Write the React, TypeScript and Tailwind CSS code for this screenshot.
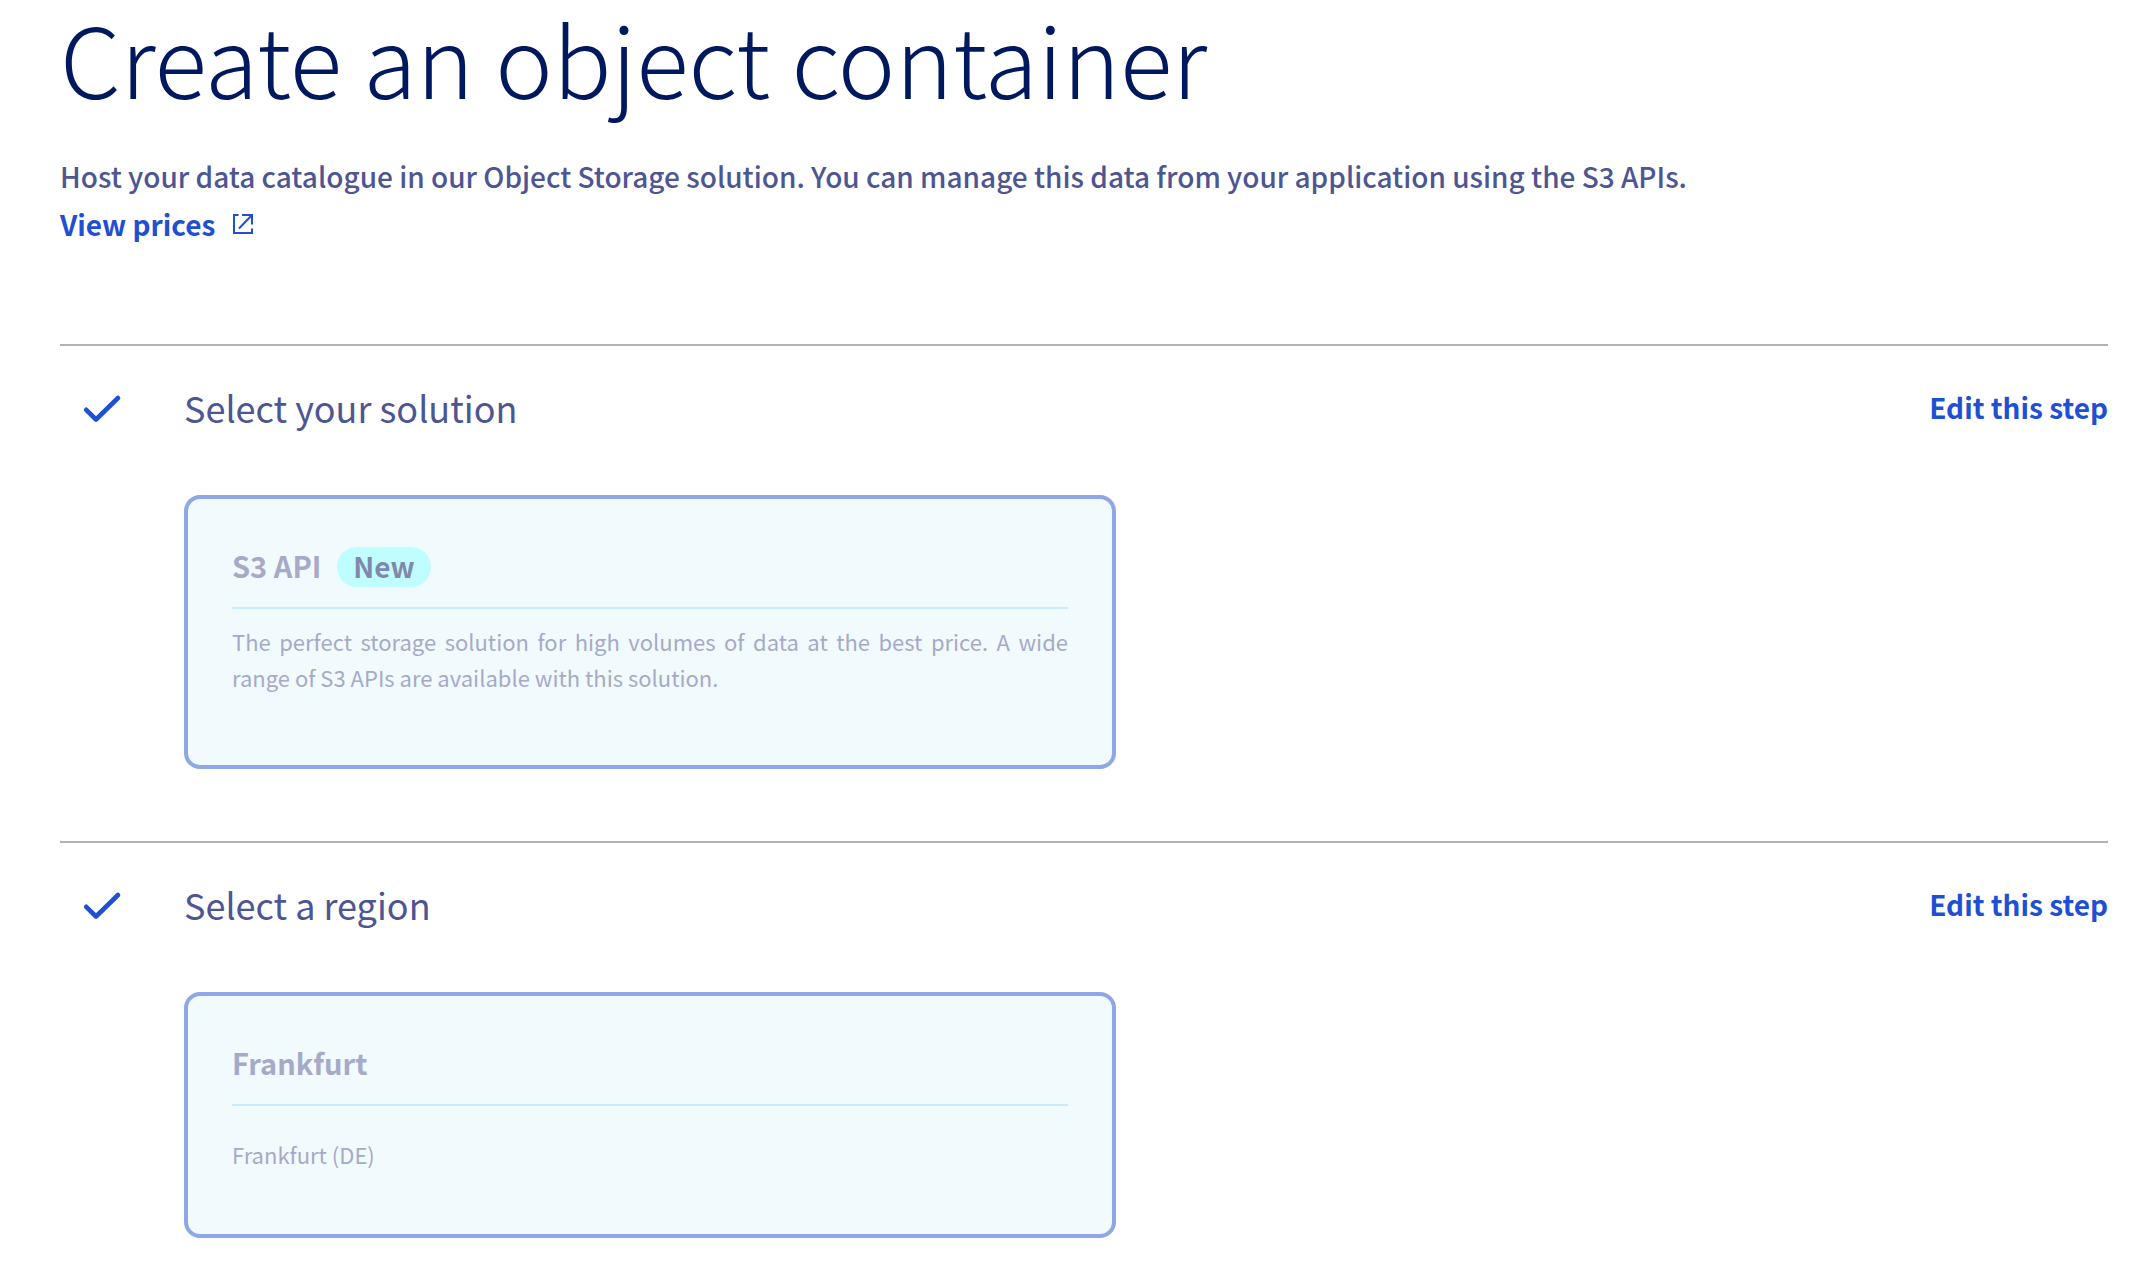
import { ReactNode } from "react";

interface StepProps {
  title: string;
  children: ReactNode;
}

interface SolutionCardProps {
  title: string;
  badge?: string;
  children: ReactNode;
}

function CheckIcon() {
  return (
    <svg viewBox="0 0 40 32" className="w-10 h-8" fill="none" aria-hidden="true">
      <path
        d="M4.2 18.8 L14 28.5 L36 7"
        stroke="#1f4fd3"
        strokeWidth="4.6"
        strokeLinecap="round"
        strokeLinejoin="round"
      />
    </svg>
  );
}

function ExternalLinkIcon() {
  return (
    <svg viewBox="0 0 20 20" className="w-5 h-5" fill="none" aria-hidden="true">
      <path
        d="M5.5 1H1V19H19V14.5M9 1H19V10.5M19 1L6 14.5"
        stroke="#1f4fd3"
        strokeWidth="2"
      />
    </svg>
  );
}

function Step({ title, children }: StepProps) {
  return (
    <section className="border-t-2 border-[#b3b3b3] pt-[37px] pb-[72px]">
      <div className="flex items-center">
        <div className="w-[124px] pl-[22px]">
          <CheckIcon />
        </div>
        <h2 className="flex-1 text-[36px] leading-[48px] text-[#4d5592]">{title}</h2>
        <button type="button" className="text-[28px] leading-[48px] font-bold text-[#1f4fd3]">
          Edit this step
        </button>
      </div>
      <div className="grid grid-cols-2 gap-[60px] pl-[124px] mt-16">{children}</div>
    </section>
  );
}

function SolutionCard({ title, badge, children }: SolutionCardProps) {
  return (
    <div className="border-4 border-[#8fa7e9] rounded-[16px] bg-[#f1fafd] p-11 text-[#a6aac8]">
      <div className="flex items-center gap-4 pb-4 border-b-2 border-[#cae9f9]">
        <h3 className="pb-1 text-[29px] leading-[44px] font-bold">{title}</h3>
        {badge && (
          <span className="rounded-full bg-[#c0fdff] px-4 pb-0.5 text-[28px] leading-[38px] font-bold text-[#8088ad]">
            {badge}
          </span>
        )}
      </div>
      {children}
    </div>
  );
}

function App() {
  return (
    <main className="pl-[60px] pr-[42px] bg-white font-['Noto_Sans_CJK_SC',sans-serif]">
      <h1 className="text-[97px] leading-[114px] font-light text-[#00185e]">
        Create an object container
      </h1>
      <div className="mt-[38px] mb-24 text-[28px] leading-[48px] font-medium text-[#4d5592]">
        <p>
          Host your data catalogue in our Object Storage solution. You can manage this data from
          your application using the S3 APIs.
        </p>
        <a href="#" className="inline-flex items-center gap-[18px] font-bold text-[#1f4fd3]">
          View prices
          <ExternalLinkIcon />
        </a>
      </div>

      <Step title="Select your solution">
        <SolutionCard title="S3 API" badge="New">
          <p className="pt-3.5 pb-[26px] text-[22px] leading-[36px] text-justify">
            The perfect storage solution for high volumes of data at the best price. A wide range of
            S3 APIs are available with this solution.
          </p>
        </SolutionCard>
      </Step>

      <Step title="Select a region">
        <SolutionCard title="Frankfurt">
          <p className="pt-[30px] pb-[18px] text-[22px] leading-[36px]">Frankfurt (DE)</p>
        </SolutionCard>
      </Step>
    </main>
  );
}

export default App;
